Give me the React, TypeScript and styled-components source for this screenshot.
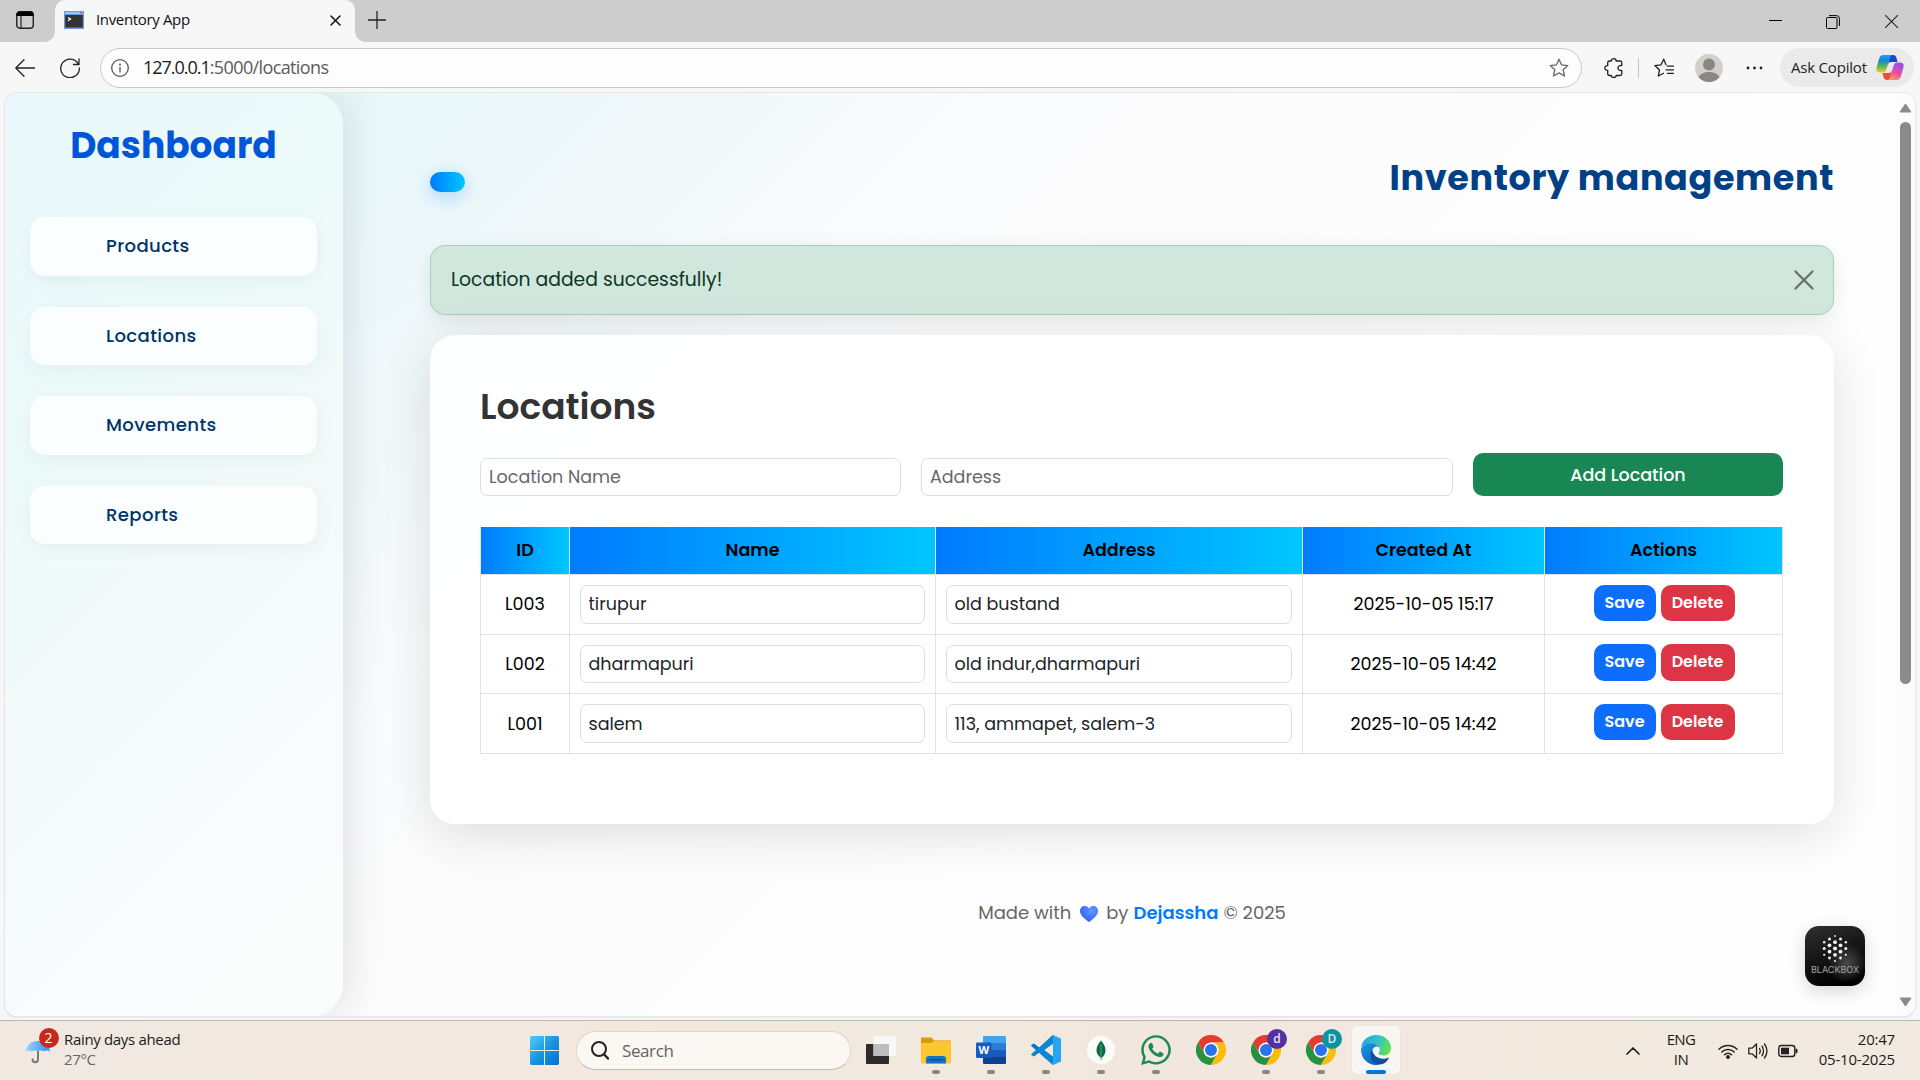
import React from "react";
import styled, { createGlobalStyle, css } from "styled-components";
import { FaWhatsapp } from "react-icons/fa";

const ui = `"Open Sans", "Noto Sans", sans-serif`;
const brand = `Poppins, Inter, "Open Sans", sans-serif`;

const GlobalStyle = createGlobalStyle`
  * { box-sizing: border-box; }
  body { margin: 0; background: #f7f7f7; overflow: hidden; }
  button, input { font: inherit; margin: 0; }
  svg { display: block; flex: none; }
`;

const Screen = styled.div`
  width: 1920px;
  height: 1080px;
  display: flex;
  flex-direction: column;
  background: #f7f7f7;
  font-family: ${ui};
  color: #111;
  overflow: hidden;
`;

/* ---------- browser chrome ---------- */

const TabStrip = styled.div`
  height: 42px;
  display: flex;
  background: #cdcdcd;
`;

const Slot = styled.div<{ $w: number; $ml?: number }>`
  width: ${(p) => p.$w}px;
  margin-left: ${(p) => p.$ml ?? 0}px;
  flex: none;
  display: flex;
  align-items: center;
  justify-content: center;
`;

const StripSlot = styled(Slot)`
  height: 40px;
`;

const WindowSlot = styled(Slot)`
  height: 43px;
`;

const Tab = styled.div`
  position: relative;
  width: 300px;
  height: 42px;
  margin-left: 5px;
  padding: 0 14px 2px 9px;
  display: flex;
  align-items: center;
  background: #f7f7f7;
  border-radius: 10px 10px 0 0;

  &::before,
  &::after {
    content: "";
    position: absolute;
    bottom: 0;
    width: 10px;
    height: 10px;
  }
  &::before {
    left: -10px;
    background: radial-gradient(circle at 0 0, #cdcdcd 9.5px, #f7f7f7 10px);
  }
  &::after {
    right: -10px;
    background: radial-gradient(circle at 100% 0, #cdcdcd 9.5px, #f7f7f7 10px);
  }
`;

const TabTitle = styled.span`
  flex: 1;
  margin-left: 12px;
  padding-bottom: 2px;
  font-size: 15px;
  letter-spacing: -0.35px;
`;

const Spacer = styled.div`
  flex: 1;
`;

const Toolbar = styled.div`
  height: 51px;
  display: flex;
  align-items: center;
`;

const AddressBar = styled.div`
  width: 1482px;
  height: 40px;
  margin-left: 10px;
  padding: 0 12px 0 10px;
  display: flex;
  align-items: center;
  border: 1px solid #c8c8c8;
  border-radius: 20px;
  background: #fdfdfd;
`;

const Url = styled.span`
  flex: 1;
  margin-left: 14px;
  padding-bottom: 1px;
  font-size: 18px;
  color: #1b1b1b;
  letter-spacing: -1.02px;

  span {
    color: #5c5c5c;
    letter-spacing: -0.62px;
  }
`;

const Divider = styled.div`
  width: 1px;
  height: 20px;
  background: #c4c4c4;
`;

const CopilotPill = styled.div`
  width: 134px;
  height: 39px;
  margin-left: 1px;
  padding: 0 10px 0 11px;
  display: flex;
  align-items: center;
  justify-content: space-between;
  border-radius: 20px;
  background: #eaeaea;
  font-size: 15px;
  letter-spacing: -0.2px;
  color: #222;

  span { padding-bottom: 2px; }
`;

/* ---------- page ---------- */

const Frame = styled.div`
  position: relative;
  width: 1910px;
  height: 923px;
  margin-left: 5px;
  display: flex;
  border-radius: 12px;
  overflow: hidden;
  background: linear-gradient(135deg, #e2f7fe 0%, #e8f8f9 13%, #ecf8fa 18%, #f2f8fa 26%, #fafbfc 36%, #fdfcfd 50%, #fefefe 65%, #fefefe 100%);
  font-family: ${brand};
`;

const FrameShell = styled.div`
  width: 1920px;
  height: 927px;

  & > div {
    box-shadow: 0 0 0 1px #e6e6e6, 0 1px 2px rgba(0, 0, 0, 0.18);
  }
`;

const Sidebar = styled.aside`
  width: 338px;
  flex: none;
  padding: 31px 26px 0 25px;
  border-radius: 0 31px 31px 0;
  background: rgba(250, 255, 253, 0.3);
  box-shadow: 5px 0 38px rgba(0, 0, 0, 0.11);
  clip-path: inset(0 -60px 0 0);
`;

const SidebarTitle = styled.h2`
  margin: 0 0 49px;
  font-size: 36px;
  line-height: 44px;
  font-weight: 700;
  text-align: center;
  color: #0056d6;
`;

const Nav = styled.nav`
  display: flex;
  flex-direction: column;
  gap: 31px;
`;

const NavItem = styled.a`
  height: 58.6px;
  padding: 0 0 1px 76px;
  display: flex;
  align-items: center;
  border-radius: 15px;
  background: rgba(255, 255, 255, 0.72);
  box-shadow: 0 5px 19px rgba(0, 50, 50, 0.055);
  font-size: 18.1px;
  font-weight: 500;
  letter-spacing: 0.375px;
  color: #003366;
`;

const Main = styled.main`
  width: 1404px;
  margin-left: 87px;
  padding-top: 61px;
`;

const Header = styled.header`
  height: 43px;
  display: flex;
  justify-content: space-between;
`;

const Pill = styled.div`
  width: 35px;
  height: 20px;
  margin-top: 18px;
  border-radius: 10px;
  background: linear-gradient(90deg, #007bff, #00c6ff);
  box-shadow: 0 5px 19px rgba(0, 123, 255, 0.3);
`;

const PageTitle = styled.h1`
  margin: 0;
  font-size: 35px;
  line-height: 47px;
  font-weight: 700;
  letter-spacing: 0.625px;
  color: #004085;
`;

const Alert = styled.div`
  height: 70px;
  margin-top: 48px;
  padding: 0 19.5px 0 20px;
  display: flex;
  align-items: center;
  justify-content: space-between;
  border: 1px solid #a3cfbb;
  border-radius: 15px;
  background: #d1e7dd;
  box-shadow: 0 5px 19px rgba(0, 0, 0, 0.09);
  font-size: 18.75px;
  line-height: 28px;
  color: #0a3622;

  span { padding-bottom: 1px; }
`;

const Card = styled.section`
  height: 489px;
  margin-top: 20px;
  padding: 51px 50px 0;
  border-radius: 25px;
  background: rgba(255, 255, 255, 0.88);
  box-shadow: 0 10px 50px rgba(0, 0, 0, 0.12);
`;

const CardTitle = styled.h2`
  margin: 0 0 25px;
  font-size: 36px;
  line-height: 42px;
  font-weight: 600;
  color: #333;
`;

const Form = styled.form`
  display: grid;
  grid-template-columns: 421px 532px 310px;
  gap: 20px;
  align-items: end;
`;

const Field = styled.input`
  height: 38.5px;
  width: 100%;
  padding: 0 8px;
  border: 1px solid #dcdfe2;
  border-radius: 7px;
  background: #fff;
  font-family: ${brand};
  font-size: 17.5px;
  outline: none;
  color: #212529;

  &::placeholder {
    color: #65696d;
    opacity: 1;
  }
`;

const AddButton = styled.button`
  height: 43px;
  padding: 1px 0 0;
  border: 0;
  border-radius: 10px;
  background: #198754;
  color: #fff;
  font-size: 17.5px;
  font-weight: 500;
`;

const Table = styled.div`
  width: 1303px;
  margin-top: 31px;
  border-left: 1px solid #dee2e6;
  background: #fff;
  font-size: 17.5px;
  color: #000;
`;

const Row = styled.div<{ $head?: boolean }>`
  height: ${(p) => (p.$head ? 48 : 59.67)}px;
  display: grid;
  grid-template-columns: 89px 366px 367px 242px 238px;
`;

const Cell = styled.div`
  display: flex;
  align-items: center;
  justify-content: center;
  border-right: 1px solid #dee2e6;
  border-bottom: 1px solid #dee2e6;
`;

const FieldCell = styled(Cell)`
  padding: 0 10.5px 0 9.5px;
`;

const HeadCell = styled(Cell)`
  background: linear-gradient(90deg, #007bff, #00c6ff) padding-box;
  padding: 0 0 1px;
  font-weight: 600;
`;

const ActionCell = styled(Cell)`
  align-items: flex-start;
  padding: 9.5px 0 0 1px;
  gap: 5px;
`;

const ActionButton = styled.button<{ $danger?: boolean }>`
  width: ${(p) => (p.$danger ? 74 : 62)}px;
  height: 36.5px;
  padding: 0 0 1px;
  border: 0;
  border-radius: 10px;
  background: ${(p) => (p.$danger ? "#dc3545" : "#0d6efd")};
  color: #fff;
  font-size: 16px;
  font-weight: 600;
`;

const Footer = styled.footer`
  margin-top: 77px;
  height: 22px;
  display: flex;
  align-items: center;
  justify-content: center;
  font-size: 18px;
  color: #666;

  svg { margin: 4px 8px 0 9px; }
  b { margin: 0 5px 0 5px; font-weight: 600; color: #007bff; }
`;

const Scrollbar = styled.div`
  width: 19px;
  margin-left: auto;
  padding: 10px 3px 9px 3px;
  display: flex;
  flex-direction: column;
  align-items: center;
  background: #fcfcfc;
`;

const Thumb = styled.div`
  width: 11px;
  height: 562px;
  margin-top: 9px;
  border-radius: 6px;
  background: #8b8b8b;
`;

const Blackbox = styled.div`
  position: absolute;
  right: 50px;
  bottom: 30px;
  width: 60px;
  height: 60px;
  padding-top: 8px;
  display: flex;
  flex-direction: column;
  align-items: center;
  border-radius: 14px;
  background: radial-gradient(circle at 70% 62%, #4a4a4a 0, transparent 35%), linear-gradient(160deg, #303030 0%, #161616 45%, #000 85%);
  box-shadow: 0 5px 18px rgba(0, 0, 0, 0.16);
  font: 400 9px/13px Inter, sans-serif;
  color: #a5a5a5;
`;

/* ---------- taskbar ---------- */

const Taskbar = styled.div`
  height: 60px;
  display: flex;
  align-items: center;
  border-top: 1px solid #b9b5b0;
  background: linear-gradient(90deg, #f0e8e1, #f3e8df 25%, #f1e9de 45%, #f2e7de 60%, #f2eae0);
  font-size: 15px;
`;

const Weather = styled.div`
  position: relative;
  width: 516px;
  height: 59px;
  padding-left: 25px;
  display: flex;
  align-items: center;
`;

const Badge = styled.span`
  position: absolute;
  left: 38.5px;
  top: 7px;
  width: 20px;
  height: 20px;
  border-radius: 50%;
  background: #c42b1c;
  color: #fff;
  font-size: 14px;
  line-height: 20px;
  text-align: center;
`;

const Lines = styled.div<{ $align?: string; $w?: number; $ls?: number }>`
  display: flex;
  flex-direction: column;
  width: ${(p) => (p.$w ? `${p.$w}px` : "auto")};
  padding-bottom: 3px;
  text-align: ${(p) => p.$align ?? "left"};
  line-height: 20px;
  letter-spacing: ${(p) => p.$ls ?? -0.33}px;
  color: #1b1b1b;
`;

const Muted = styled.span`
  color: #666;
`;

const SearchBox = styled.div`
  width: 275px;
  height: 39px;
  margin: 0 2.5px 0 3px;
  padding-left: 14px;
  display: flex;
  align-items: center;
  gap: 13px;
  border: 1px solid #dfd6ce;
  border-bottom-color: #c3bbb4;
  border-radius: 20px;
  background: #fbf8f4;
  font-size: 17px;
  letter-spacing: -0.4px;
  color: #626262;
`;

const TaskApp = styled.div<{ $active?: boolean }>`
  position: relative;
  width: 48px;
  height: 48px;
  margin: 0 3.5px 1px;
  display: flex;
  align-items: center;
  justify-content: center;
  border-radius: 5px;
  ${(p) =>
    p.$active &&
    css`
      background: #f9f5f1;
      box-shadow: 0 0 0 1px #eee6df;
    `}
`;

const Running = styled.i<{ $active?: boolean }>`
  position: absolute;
  bottom: 0;
  width: ${(p) => (p.$active ? 20 : 8)}px;
  height: 4px;
  border-radius: 2px;
  background: ${(p) => (p.$active ? "#0078d4" : "#8b8680")};
`;

const Profile = styled.span<{ $c: string }>`
  position: absolute;
  left: 25px;
  top: 3px;
  width: 20px;
  height: 20px;
  border-radius: 50%;
  background: ${(p) => p.$c};
  color: #e5e0f2;
  font: 600 12px/20px ${ui};
  text-align: center;
`;

const Tray = styled.div`
  margin-left: auto;
  padding-right: 25px;
  display: flex;
  align-items: center;
`;

const TrayIcons = styled.div`
  margin-left: 9px;
  display: flex;
  gap: 10px;
`;

/* ---------- drawings ---------- */

const Line = (p: React.SVGProps<SVGSVGElement>) => (
  <svg fill="none" stroke="#222" strokeWidth="1.3" strokeLinecap="round" strokeLinejoin="round" {...p} />
);

const star = "M10 1.2 12.6 6.9 18.8 7.6 14.2 11.8 15.5 18 10 14.9 4.5 18 5.8 11.8 1.2 7.6 7.4 6.9Z";

const Copilot = () => (
  <svg width="28" height="27" viewBox="0 0 28 27">
    <defs>
      <linearGradient id="cpA" x1="0" y1="0" x2="0" y2="1">
        <stop offset="0" stopColor="#1aa0f0" /><stop offset=".3" stopColor="#1686d8" />
        <stop offset=".6" stopColor="#4fae6a" /><stop offset="1" stopColor="#f5cf10" />
      </linearGradient>
      <linearGradient id="cpB" x1="0.3" y1="0" x2="0" y2="1">
        <stop offset="0" stopColor="#a44ee8" /><stop offset=".5" stopColor="#e8519a" /><stop offset="1" stopColor="#ffa36a" />
      </linearGradient>
    </defs>
    <path d="M14 1h3c2 0 3 1.200 3.500 3l1 4h-6c-2 0-3 1-3.500 3Z" fill="#1547d2" />
    <path d="M14 26h-3c-2 0-3-1.200-3.500-3l-1-4h6c2 0 3-1 3.500-3Z" fill="#ef5030" />
    <path d="M7.500 1H17c-2 0-2.700 1.500-3.300 3.500L10.500 15c-.7 2.300-1.600 3.500-3.500 3.500H3.500C.8 18.500-.2 16.300.6 13.500L3 5C3.800 2.300 5 1 7.500 1Z" fill="url(#cpA)" />
    <path d="M20.500 26H11c2 0 2.700-1.500 3.300-3.500L17.500 12c.7-2.300 1.600-3.500 3.500-3.500h3.500c2.700 0 3.700 2.200 2.900 5L25 22c-.8 2.700-2 4-4.500 4Z" fill="url(#cpB)" />
  </svg>
);

const Chrome = () => (
  <svg width="30" height="30" viewBox="-15 -15 30 30">
    <path d="M-13 -7.500A15 15 0 0 1 13 -7.500L0 -7.500L-6.500 3.750Z" fill="#e33b2e" />
    <path d="M-13 -7.500L-6.500 3.750A7.500 7.500 0 0 0 6.500 3.750L0 15A15 15 0 0 1 -13 -7.500Z" fill="#26923f" />
    <path d="M13 -7.500A15 15 0 0 1 0 15L6.500 3.750A7.500 7.500 0 0 0 0 -7.500Z" fill="#fbbd0a" />
    <circle r="7.500" fill="#fff" /><circle r="6" fill="#2a72ee" />
  </svg>
);

const Edge = () => (
  <svg width="30" height="30" viewBox="0 0 30 30">
    <defs>
      <linearGradient id="egA" x1="0" y1=".3" x2="1" y2=".6">
        <stop offset="0" stopColor="#23a5de" /><stop offset=".5" stopColor="#32c3c6" /><stop offset="1" stopColor="#68e04a" />
      </linearGradient>
      <linearGradient id="egB" x1="0" y1="0" x2=".6" y2="1">
        <stop offset="0" stopColor="#1a9de0" /><stop offset="1" stopColor="#0a63c2" />
      </linearGradient>
    </defs>
    <path d="M0 13C1 5 7.500 0 15 0c9 0 15 6 15 13 0 5-3.500 7.500-7.500 7.500-3.500 0-5-1.200-5-2.200 0-.8 1.300-1.300 1.300-3.800 0-3-3.300-6-8.300-6C5 8.500 1.500 10.500 0 13Z" fill="url(#egA)" />
    <path d="M0 14.500C.8 11 4.500 8.300 9.500 8.300c4 0 7.500 1.700 8.800 4.200-1-.8-2.200-1-3.300-1-3 1-4.500 4-4.500 7 0 5.500 3.500 9.500 8 11-1.100.3-2.300.5-3.500.5C6.500 30 0 23 0 14.500Z" fill="url(#egB)" />
    <path d="M11.500 14.500c-1.300 1.500-2 3.300-2 5.500 0 5 4 9.600 9.200 9.600 4 0 7.300-3 9-6 .3-.6-.2-1.100-.9-.8-1.400.7-2.800 1-4.600 1-5.700 0-10.700-3.800-10.700-9.300Z" fill="#12509c" />
  </svg>
);

const VsCode = () => (
  <svg width="30" height="30" viewBox="0 0 30 30">
    <path d="M22 0 L8.300 12.600 3 8.600 .6 9.700 0 10.800 22 30Z M22 8.500 13 15l9 6.700Z" fill="#0078c8" fillRule="evenodd" />
    <path d="M22 30 8.300 17.400 3 21.400.6 20.300 0 19.200 5 15 10 11 22 0Z M22 8.500 13 15l9 6.700Z" fill="#0a86d2" fillRule="evenodd" />
    <path d="M22 0 30 3.500V26.500L22 30 20.500 28.500 22 27Z" fill="#25a5f2" />
  </svg>
);

const dots = [
  [0, -12.5, 0.9], [-5.5, -9.5, 1.5], [5.5, -9.5, 1.5], [0, -6.3, 1.9], [-10.8, -6.3, 1.2], [10.8, -6.3, 1.2],
  [-5.5, -3.2, 1.9], [5.5, -3.2, 1.9], [0, 0, 2.1], [-10.8, 0, 1.5], [10.8, 0, 1.5], [-5.5, 3.2, 1.9], [5.5, 3.2, 1.9],
  [0, 6.3, 1.9], [-10.8, 6.3, 1.1], [10.8, 6.3, 1.1], [-5.5, 9.5, 1.4], [5.5, 9.5, 1.4], [0, 12.5, 1],
];

/* ---------- data ---------- */

const nav = ["Products", "Locations", "Movements", "Reports"];
const columns = ["ID", "Name", "Address", "Created At", "Actions"];

const locations = [
  { id: "L003", name: "tirupur", address: "old bustand", created: "2025-10-05 15:17" },
  { id: "L002", name: "dharmapuri", address: "old indur,dharmapuri", created: "2025-10-05 14:42" },
  { id: "L001", name: "salem", address: "113, ammapet, salem-3", created: "2025-10-05 14:42" },
];

const BrowserTabs = () => (
  <TabStrip>
    <StripSlot $w={50}>
      <svg width="18" height="18" viewBox="0 0 18 18">
        <rect x=".75" y=".75" width="16.500" height="16.500" rx="3" fill="none" stroke="#222" strokeWidth="1.4" />
        <path d="M.5 5V3.500Q.5.500 3.500.500H14.500Q17.500.500 17.500 3.500V5Z" fill="#000" />
        <path d="M5 5V17" stroke="#222" strokeWidth="1.2" />
      </svg>
    </StripSlot>
    <Tab>
      <svg width="20" height="18" viewBox="0 0 20 18">
        <rect width="20" height="18" fill="#6c9bd8" />
        <rect x="1" y="1" width="18" height="2" fill="#9cc3f0" />
        <rect x="16" y=".8" width="2.500" height="1.800" fill="#e0625f" />
        <rect x="1.200" y="4" width="17.600" height="12.500" fill="#333" />
        <path d="M4 6.500 6.500 8 4 9.700" fill="none" stroke="#fff" strokeWidth="1.300" />
      </svg>
      <TabTitle>Inventory App</TabTitle>
      <Line width="11" height="11" viewBox="0 0 11 11" stroke="#111" strokeWidth="1.5"><path d="M1 1 10 10M10 1 1 10" /></Line>
    </Tab>
    <StripSlot $w={44}>
      <Line width="18" height="18" viewBox="0 0 18 18"><path d="M9 .5V17.500M.5 9H17.500" /></Line>
    </StripSlot>
    <Spacer />
    <StripSlot $w={58}>
      <svg width="13" height="13" viewBox="0 0 13 13"><path d="M0 6.500H13" stroke="#000" /></svg>
    </StripSlot>
    <WindowSlot $w={58}>
      <svg width="14" height="14" viewBox="0 0 14 14" fill="none" stroke="#000">
        <rect x=".5" y="2.500" width="10.500" height="11" rx="1" />
        <path d="M3 .6H10.500Q13.400.6 13.400 3.500V11" />
      </svg>
    </WindowSlot>
    <WindowSlot $w={58}>
      <svg width="13" height="13" viewBox="0 0 13 13"><path d="M0 0 13 13M13 0 0 13" stroke="#222" strokeWidth="1.100" /></svg>
    </WindowSlot>
  </TabStrip>
);

const BrowserToolbar = () => (
  <Toolbar>
    <Slot $w={50}>
      <Line width="20" height="18" viewBox="0 0 20 18"><path d="M9 .8.8 9 9 17.200M.8 9H19.500" /></Line>
    </Slot>
    <Slot $w={40}>
      <Line width="20" height="20" viewBox="0 0 20 20"><path d="M18.200 6A9.300 9.300 0 1 0 19.300 10M19 1V6.500H13.500" /></Line>
    </Slot>
    <AddressBar>
      <Line width="18" height="18" viewBox="0 0 18 18" stroke="#555">
        <circle cx="9" cy="9" r="8.300" /><path d="M9 8.300V13" /><circle cx="9" cy="5.500" r=".4" fill="#555" />
      </Line>
      <Url>127.0.0.1<span>:5000/locations</span></Url>
      <Line width="20" height="20" viewBox="0 0 20 20" stroke="#666"><path d={star} /></Line>
    </AddressBar>
    <Slot $w={49} $ml={7}>
      <Line width="20" height="20" viewBox="0 0 20 20">
        <path d="M5.500 3H7.300C7.300 1.500 8.300.700 9.700.700S12.200 1.500 12.200 3H16Q17.800 3 17.800 4.800V7.500C15.500 7.200 14 8.300 14 10S15.500 12.800 17.800 12.500V15.700Q17.800 17.500 16 17.500H12.200C12.200 18.700 11 19.500 9.700 19.500S7.300 18.700 7.300 17.500H5.500Q3.700 17.500 3.700 15.700V12.300C2 12.300.800 11.300.800 10S2 7.600 3.700 7.600V4.800Q3.700 3 5.500 3" />
      </Line>
    </Slot>
    <Divider />
    <Slot $w={50}>
      <Line width="20" height="20" viewBox="0 0 20 20">
        <path d="M12 6.800 9.700 1.200 7 6.800.8 7.600 5.500 11.900 4.300 18 9.500 15.200M13.500 8.200H19.500M12 11.800H19.500M13.500 15.400H19.500" />
      </Line>
    </Slot>
    <Slot $w={40}>
      <svg width="28" height="28" viewBox="0 0 28 28">
        <circle cx="14" cy="14" r="14" fill="#d3d0cc" />
        <circle cx="14" cy="10.500" r="6" fill="#8b8683" />
        <path d="M3.500 23.200C5.500 19.500 9.500 18 14 18s8.500 1.500 10.500 5.200A14 14 0 0 1 3.500 23.200Z" fill="#8b8683" />
      </svg>
    </Slot>
    <Slot $w={50}>
      <svg width="17" height="4" viewBox="0 0 17 4" fill="#222"><circle cx="2" cy="2" r="1.400" /><circle cx="8.500" cy="2" r="1.400" /><circle cx="15" cy="2" r="1.400" /></svg>
    </Slot>
    <CopilotPill><span>Ask Copilot</span><Copilot /></CopilotPill>
  </Toolbar>
);

const LocationsPage = () => (
  <FrameShell>
    <Frame>
      <Sidebar>
        <SidebarTitle>Dashboard</SidebarTitle>
        <Nav>{nav.map((n) => <NavItem key={n}>{n}</NavItem>)}</Nav>
      </Sidebar>
      <Main>
        <Header>
          <Pill />
          <PageTitle>Inventory management</PageTitle>
        </Header>
        <Alert>
          <span>Location added successfully!</span>
          <svg width="20" height="20" viewBox="0 0 20 20"><path d="M1.500 1.500 18.500 18.500M18.500 1.500 1.500 18.500" stroke="#66736c" strokeWidth="2.300" strokeLinecap="round" /></svg>
        </Alert>
        <Card>
          <CardTitle>Locations</CardTitle>
          <Form>
            <Field placeholder="Location Name" />
            <Field placeholder="Address" />
            <AddButton type="button">Add Location</AddButton>
          </Form>
          <Table>
            <Row $head>{columns.map((c) => <HeadCell key={c}>{c}</HeadCell>)}</Row>
            {locations.map((l) => (
              <Row key={l.id}>
                <Cell>{l.id}</Cell>
                <FieldCell><Field defaultValue={l.name} /></FieldCell>
                <FieldCell><Field defaultValue={l.address} /></FieldCell>
                <Cell>{l.created}</Cell>
                <ActionCell>
                  <ActionButton>Save</ActionButton>
                  <ActionButton $danger>Delete</ActionButton>
                </ActionCell>
              </Row>
            ))}
          </Table>
        </Card>
        <Footer>
          <span>Made with</span>
          <svg width="18" height="16" viewBox="0 0 18 16">
            <defs>
              <radialGradient id="heart" cx=".65" cy=".3" r=".8"><stop offset="0" stopColor="#5a9bff" /><stop offset="1" stopColor="#3355ff" /></radialGradient>
            </defs>
            <path d="M9 16C4 12.500 0 9 0 5 0 2 2 0 4.700 0 6.700 0 8.200 1 9 2.500 9.800 1 11.300 0 13.300 0 16 0 18 2 18 5c0 4-4 7.500-9 11Z" fill="url(#heart)" />
          </svg>
          <span>by</span>
          <b>Dejassha</b>
          <span>© 2025</span>
        </Footer>
      </Main>
      <Scrollbar>
        <svg width="13" height="10" viewBox="0 0 13 10"><path d="M6.500 1 12 9H1Z" fill="#8b8b8b" stroke="#8b8b8b" strokeLinejoin="round" /></svg>
        <Thumb />
        <Spacer />
        <svg width="13" height="10" viewBox="0 0 13 10"><path d="M6.500 9 12 1H1Z" fill="#8b8b8b" stroke="#8b8b8b" strokeLinejoin="round" /></svg>
      </Scrollbar>
      <Blackbox>
        <svg width="30" height="29" viewBox="-15 -14.500 30 29" fill="#f2f2f2">
          {dots.map(([x, y, r], i) => <circle key={i} cx={x} cy={y} r={r} />)}
        </svg>
        BLACKBOX
      </Blackbox>
    </Frame>
  </FrameShell>
);

const WindowsTaskbar = () => (
  <Taskbar>
    <Weather>
      <svg width="26" height="26" viewBox="0 0 26 26">
        <defs><linearGradient id="umb"><stop offset="0" stopColor="#9ad0ff" /><stop offset="1" stopColor="#2e90ee" /></linearGradient></defs>
        <path d="M13 12V21.500a2.700 2.700 0 0 1-5.400 0V20.500" fill="none" stroke="#7d7774" strokeWidth="2" />
        <path d="M1 13.500C1.500 7 6.500 3 13 3s11.500 4 12 10.500C23.500 12 20.500 12 19 13.500c-1.500-1.500-4.500-1.500-6 0-1.500-1.500-4.500-1.500-6 0-1.500-1.500-4.500-1.500-6 0Z" fill="url(#umb)" />
      </svg>
      <Badge>2</Badge>
      <Slot $w={13} />
      <Lines><span>Rainy days ahead</span><Muted>27°C</Muted></Lines>
    </Weather>
    <Slot $w={57}>
      <svg width="29" height="29" viewBox="0 0 29 29">
        <defs><linearGradient id="win" gradientUnits="userSpaceOnUse" x1="0" y1="0" x2="29" y2="29"><stop offset="0" stopColor="#4fd0fb" /><stop offset=".5" stopColor="#1a94e2" /><stop offset="1" stopColor="#0672d0" /></linearGradient></defs>
        <path d="M1 0H14V14H0V1ZM15 0H28L29 1V14H15ZM0 15H14V29H1L0 28ZM15 15H29V28L28 29H15Z" fill="url(#win)" />
      </svg>
    </Slot>
    <SearchBox>
      <Line width="18" height="19" viewBox="0 0 18 19" strokeWidth="2"><circle cx="8" cy="8" r="7" /><path d="M13 13.200 17 17.500" strokeWidth="2.400" /></Line>
      Search
    </SearchBox>
    <TaskApp>
      <svg width="30" height="28" viewBox="0 0 30 28">
        <rect y="8" width="23" height="20" rx="1" fill="#2b2b2b" />
        <rect x="7.500" y="0" width="22.500" height="20" rx="1" fill="#f8f8f8" />
        <path d="M7.500 8H23V20H7.500Z" fill="#bdbdbd" />
      </svg>
    </TaskApp>
    <TaskApp>
      <svg width="30" height="27" viewBox="0 0 30 27">
        <path d="M0 1.500Q0 .5 1 .5H10.500L13 3.500H29Q30 3.500 30 4.500V8H0Z" fill="#dc9a06" />
        <path d="M0 6H10.500L13 4.300H30V25.500Q30 26.500 29 26.500H1Q0 26.500 0 25.500Z" fill="#fdc82f" />
        <path d="M5 26.500V22Q5 19 8 19H22Q25 19 25 22V26.500Z" fill="#1072c8" />
        <path d="M8.500 22.800H21.500" stroke="#0a4a90" strokeWidth="1.300" />
      </svg>
      <Running />
    </TaskApp>
    <TaskApp>
      <svg width="30" height="28" viewBox="0 0 30 28">
        <path d="M7 1Q7 0 8 0H29Q30 0 30 1V7H7Z" fill="#41a5ee" /><path d="M7 7H30V14H7Z" fill="#2b7cd3" />
        <path d="M7 14H30V21H7Z" fill="#185abd" /><path d="M7 21H30V27Q30 28 29 28H8Q7 28 7 27Z" fill="#103f91" />
        <rect y="6.500" width="15.500" height="15.500" rx="1.300" fill="#185abd" />
        <text x="7.700" y="18.300" textAnchor="middle" fontFamily="Open Sans" fontWeight="700" fontSize="11" fill="#fff">W</text>
      </svg>
      <Running />
    </TaskApp>
    <TaskApp><VsCode /><Running /></TaskApp>
    <TaskApp>
      <svg width="28" height="28" viewBox="0 0 28 28">
        <circle cx="14" cy="14" r="14" fill="#fbfbfa" />
        <path d="M14 4.500C16 7 18.500 10 18.500 14c0 4-2 6.500-4 8-2.500-1.500-5-4-5-8C9.500 10 12 7 14 4.500Z" fill="#0b6b43" />
        <path d="M14 8V24" stroke="#5aa17e" strokeWidth="1" />
      </svg>
      <Running />
    </TaskApp>
    <TaskApp><FaWhatsapp size={34} color="#1d8a53" /><Running /></TaskApp>
    <TaskApp><Chrome /></TaskApp>
    <TaskApp><Chrome /><Profile $c="#5530a0">d</Profile><Running /></TaskApp>
    <TaskApp><Chrome /><Profile $c="#0895a1">D</Profile><Running /></TaskApp>
    <TaskApp $active><Edge /><Running $active /></TaskApp>
    <Tray>
      <Line width="14" height="8" viewBox="0 0 14 8" strokeWidth="1.700"><path d="M1 7 7 1 13 7" /></Line>
      <Slot $w={56} $ml={13}><Lines $align="center" $ls={-0.6}><span>ENG</span><span>IN</span></Lines></Slot>
      <TrayIcons>
        <Line width="20" height="16" viewBox="0 0 20 16" strokeWidth="1.500">
          <path d="M1 6.200A12.700 12.700 0 0 1 19 6.200M3.800 9A8.800 8.800 0 0 1 16.200 9M6.500 11.800A5 5 0 0 1 13.500 11.800" />
          <circle cx="10" cy="14" r="1.200" fill="#222" />
        </Line>
        <Line width="20" height="16" viewBox="0 0 20 16">
          <path d="M.8 5.200H4L8.500 1V15L4 10.800H.8ZM11.500 5.500Q13 8 11.500 10.500M14 3.200Q17 8 14 12.800M16.500 1Q21.500 8 16.500 15" />
        </Line>
        <Line width="20" height="16" viewBox="0 0 20 16" strokeWidth="1.400">
          <rect x=".8" y="2.500" width="16" height="11" rx="2.500" />
          <rect x="3" y="4.700" width="8" height="6.600" fill="#222" stroke="none" />
          <path d="M18.500 6.700V9.300" strokeWidth="2" />
        </Line>
      </TrayIcons>
      <Lines $align="right" $w={97} $ls={-0.2}><span>20:47</span><span>05-10-2025</span></Lines>
    </Tray>
  </Taskbar>
);

export default function App() {
  return (
    <Screen>
      <GlobalStyle />
      <BrowserTabs />
      <BrowserToolbar />
      <LocationsPage />
      <WindowsTaskbar />
    </Screen>
  );
}
